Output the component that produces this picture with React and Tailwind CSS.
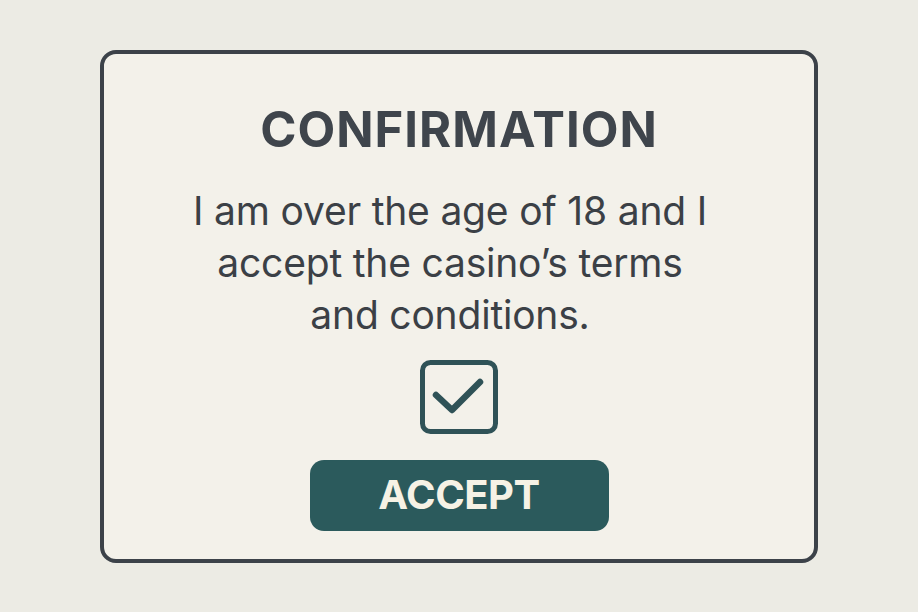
export default function App() {
    return (
        <div className="w-[918px] h-[612px] bg-[#ecebe4] flex items-center justify-center" style={{ fontFamily: 'Inter, "Noto Sans", sans-serif' }}>
            <div className="w-[718px] h-[513px] bg-[#f3f1ea] border-[4px] border-[#3c4249] rounded-[16px] flex flex-col items-center pt-[46px]">
                <h1 className="text-[49px] leading-[60px] font-bold text-[#3f454c] tracking-[1px]">CONFIRMATION</h1>

                <p className="mt-[25px] mr-[18px] text-[39px] leading-[52px] text-[#3b4046] text-center w-[620px] tracking-[-0.2px]">
                    I am over the age of 18 and I<br />
                    accept the casino’s terms<br />
                    and conditions.
                </p>

                {/* checkbox */}
                <svg className="mt-[19px]" width="78" height="74" viewBox="0 0 78 74" fill="none">
                    <rect x="2.5" y="2.5" width="73" height="69" rx="8" stroke="#2f5257" strokeWidth="5" />
                    <path d="M16 35 L32 50 L60 22" stroke="#2f5257" strokeWidth="6.5" strokeLinecap="round" strokeLinejoin="round" />
                </svg>

                <button className="mt-[26px] w-[299px] h-[71px] rounded-[14px] bg-[#2b5a5c] text-[#f6f2e5] text-[40px] font-bold tracking-[-0.5px] flex items-center justify-center">
                    ACCEPT
                </button>
            </div>
        </div>
    );
}
